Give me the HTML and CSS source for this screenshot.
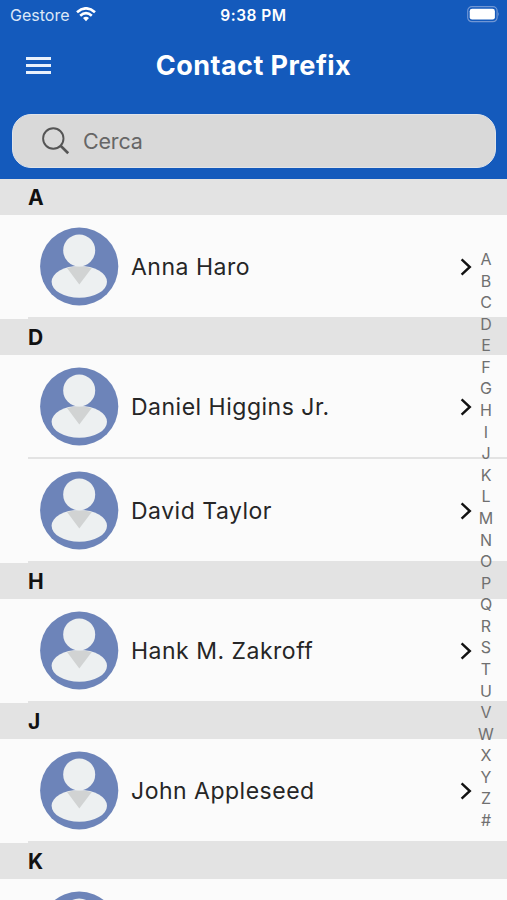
FILE: index.html
```html
<!DOCTYPE html>
<html lang="it">
  <head>
    <meta charset="UTF-8" />
    <meta name="viewport" content="width=device-width, initial-scale=1.0" />
    <title>Contact Prefix</title>
    <link rel="stylesheet" href="styles.css">
  </head>
  <body>
    <!-- shared icons -->
    <svg width="0" height="0" class="sprite">
      <symbol id="avatar" viewBox="0 0 79 79">
        <circle cx="39.2" cy="39.5" r="39.1" fill="#6d84b9" />
        <ellipse cx="39.3" cy="54.8" rx="27.7" ry="15.9" fill="#edf0f1" />
        <path d="M27 41Q39 37.5 51.8 41L39.3 57.5Z" fill="#d1d3d3" />
        <circle cx="39.2" cy="23.4" r="16" fill="#edf0f1" />
      </symbol>
      <symbol id="chevron" viewBox="0 0 12 18">
        <path d="M1.6 1.4L9.8 9L1.6 16.6" fill="none" stroke="#111" stroke-width="2.4" />
      </symbol>
    </svg>

    <header class="header">
      <div class="status-bar">
        <div class="carrier">
          <span>Gestore</span>
          <svg width="20" height="15" viewBox="0 0 20 15" fill="none" stroke="#fff" stroke-width="2.7">
            <path d="M1 5.2Q10 -2.5 19 5.2" />
            <path d="M4.2 8.7Q10 3.7 15.8 8.7" />
            <path d="M7 11.1Q10 8.6 13 11.1L10 14.3Z" fill="#fff" stroke="none" />
          </svg>
        </div>
        <span class="time">9:38 PM</span>
        <svg class="battery" width="33" height="17" viewBox="0 0 33 17">
          <rect x="0.7" y="0.7" width="29.4" height="15" rx="4.2" fill="none" stroke="#7096d4" stroke-width="1.2" />
          <rect x="2.7" y="2.8" width="25.2" height="10.8" rx="2.4" fill="#fff" />
          <path d="M31.2 6Q33 8.2 31.2 10.4Z" fill="#7096d4" />
        </svg>
      </div>
      <div class="nav-bar">
        <div class="menu-icon"><i></i><i></i><i></i></div>
        <h1>Contact Prefix</h1>
      </div>
      <div class="search-box">
        <svg width="28" height="28" viewBox="0 0 28 28" fill="none" stroke="#555" stroke-width="1.9">
          <circle cx="11.3" cy="11.5" r="10.2" />
          <path d="M18.6 18.8L26.2 26.2" stroke-width="2.6" />
        </svg>
        <span>Cerca</span>
      </div>
    </header>

    <main class="contacts" id="contacts"></main>
    <nav class="letter-index" id="letterIndex"></nav>

    <script>
      const groups = [
        { letter: "A", names: ["Anna Haro"] },
        { letter: "D", names: ["Daniel Higgins Jr.", "David Taylor"] },
        { letter: "H", names: ["Hank M. Zakroff"] },
        { letter: "J", names: ["John Appleseed"] },
        { letter: "K", names: [""] },
      ];

      document.getElementById("contacts").innerHTML = groups
        .map(
          (group) => `
            <h2 class="section-title">${group.letter}</h2>
            ${group.names
              .map(
                (name) => `
                  <div class="contact">
                    <svg class="avatar"><use href="#avatar" /></svg>
                    <span class="name">${name}</span>
                    <svg class="chevron"><use href="#chevron" /></svg>
                  </div>`
              )
              .join("")}`
        )
        .join("");

      document.getElementById("letterIndex").innerHTML = [..."ABCDEFGHIJKLMNOPQRSTUVWXYZ#"]
        .map((letter) => `<span>${letter}</span>`)
        .join("");
    </script>
  </body>
</html>
```

FILE: styles.css
```css
* {
  box-sizing: border-box;
}

body {
  margin: 0;
  position: relative;
  font-family: Inter, "Liberation Sans", sans-serif;
  background: #fbfbfb;
  color: #262626;
}

.sprite {
  display: block;
}

/* header */
.header {
  height: 179px;
  background: #145abc;
  color: #fff;
}

.status-bar {
  display: grid;
  grid-template-columns: 1fr auto 1fr;
  align-items: center;
  height: 30px;
  padding: 0 7px 0 10px;
  font-size: 16px;
}
.carrier {
  display: flex;
  align-items: center;
  gap: 7px;
  color: #dce7f7;
}
.carrier svg {
  margin-top: -2px;
}
.time {
  font-weight: 600;
  font-size: 15.5px;
  letter-spacing: 0.5px;
  margin-right: 3px;
}
.battery {
  justify-self: end;
  margin-top: -2px;
}

.nav-bar {
  display: grid;
  grid-template-columns: 25px 1fr 25px;
  align-items: center;
  height: 84px;
  padding: 0 26px 13px;
}
.nav-bar h1 {
  margin: 0;
  font-size: 27px;
  font-weight: 700;
  letter-spacing: 0.45px;
  text-align: center;
}
.menu-icon {
  display: flex;
  flex-direction: column;
  gap: 4px;
}
.menu-icon i {
  height: 3px;
  background: #e9f1fc;
}

.search-box {
  display: flex;
  align-items: center;
  gap: 13px;
  height: 54px;
  margin: 0 11px 0 12px;
  padding-left: 29px;
  border: 1px solid #e0e4ea;
  border-radius: 19px;
  background: #d9d9d9;
  color: #666;
  font-size: 21.5px;
  letter-spacing: -0.2px;
}

/* contact list */
.contacts {
  height: 721px;
  overflow: hidden;
}

.section-title {
  margin: 0;
  height: 36px;
  padding-left: 28px;
  background: #e3e3e3;
  color: #111;
  font-size: 21px;
  font-weight: 650;
  line-height: 38px;
}

.contact {
  display: flex;
  align-items: center;
  height: 104px;
  padding: 0 35px 2px 40px;
  background: linear-gradient(#e3e3e3, #e3e3e3) 28px 100% / 100% 2px no-repeat;
}
.avatar {
  width: 79px;
  height: 79px;
}
.name {
  flex: 1;
  margin-left: 12px;
  padding-top: 2px;
  font-size: 23px;
  letter-spacing: 0.5px;
}
.chevron {
  width: 12px;
  height: 18px;
  margin-top: 2px;
}

/* letters over the right edge of the list */
.letter-index {
  position: absolute;
  top: 249px;
  right: 10px;
  width: 22px;
  display: flex;
  flex-direction: column;
  align-items: center;
  color: #707070;
  font-size: 16px;
  line-height: 21.58px;
}
```
